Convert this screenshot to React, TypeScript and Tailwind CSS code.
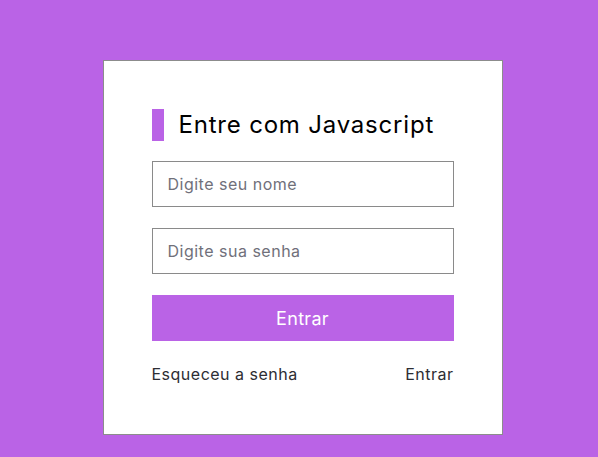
const App = () => {
  return (
    <div
      className="min-h-[457px] w-full bg-[#ba63e6] flex justify-center pt-[60px] pl-[7px]"
      style={{ fontFamily: "Inter, 'Noto Sans', sans-serif" }}
    >
      <div className="w-[400px] h-[375px] bg-white border border-[#8c8c8c] p-[48px] flex flex-col">
        <div className="flex items-center gap-[15px]">
          <div className="w-[12px] h-[32px] bg-[#ba63e6]" />
          <h1 className="text-[24px] leading-[32px] text-black tracking-[0.8px]">
            Entre com Javascript
          </h1>
        </div>
        <form className="flex flex-col gap-[21px] mt-[20px]">
          <input
            type="text"
            className="h-[46px] w-full border border-[#8a8a8a] px-[15px] text-[16px] tracking-[0.5px] text-black placeholder:text-[#70707a] outline-none"
            placeholder="Digite seu nome"
          />
          <input
            type="password"
            className="h-[46px] w-full border border-[#8a8a8a] px-[15px] text-[16px] tracking-[0.5px] text-black placeholder:text-[#70707a] outline-none"
            placeholder="Digite sua senha"
          />
          <button
            type="button"
            className="h-[46px] w-full bg-[#ba63e6] text-white text-[18px] tracking-[0.3px]"
          >
            Entrar
          </button>
        </form>
        <div className="flex justify-between mt-[21px] text-[16px] leading-[24px] tracking-[0.5px] text-[#2d2d33]">
          <a href="#">Esqueceu a senha</a>
          <a href="#">Entrar</a>
        </div>
      </div>
    </div>
  );
};

export default App;
